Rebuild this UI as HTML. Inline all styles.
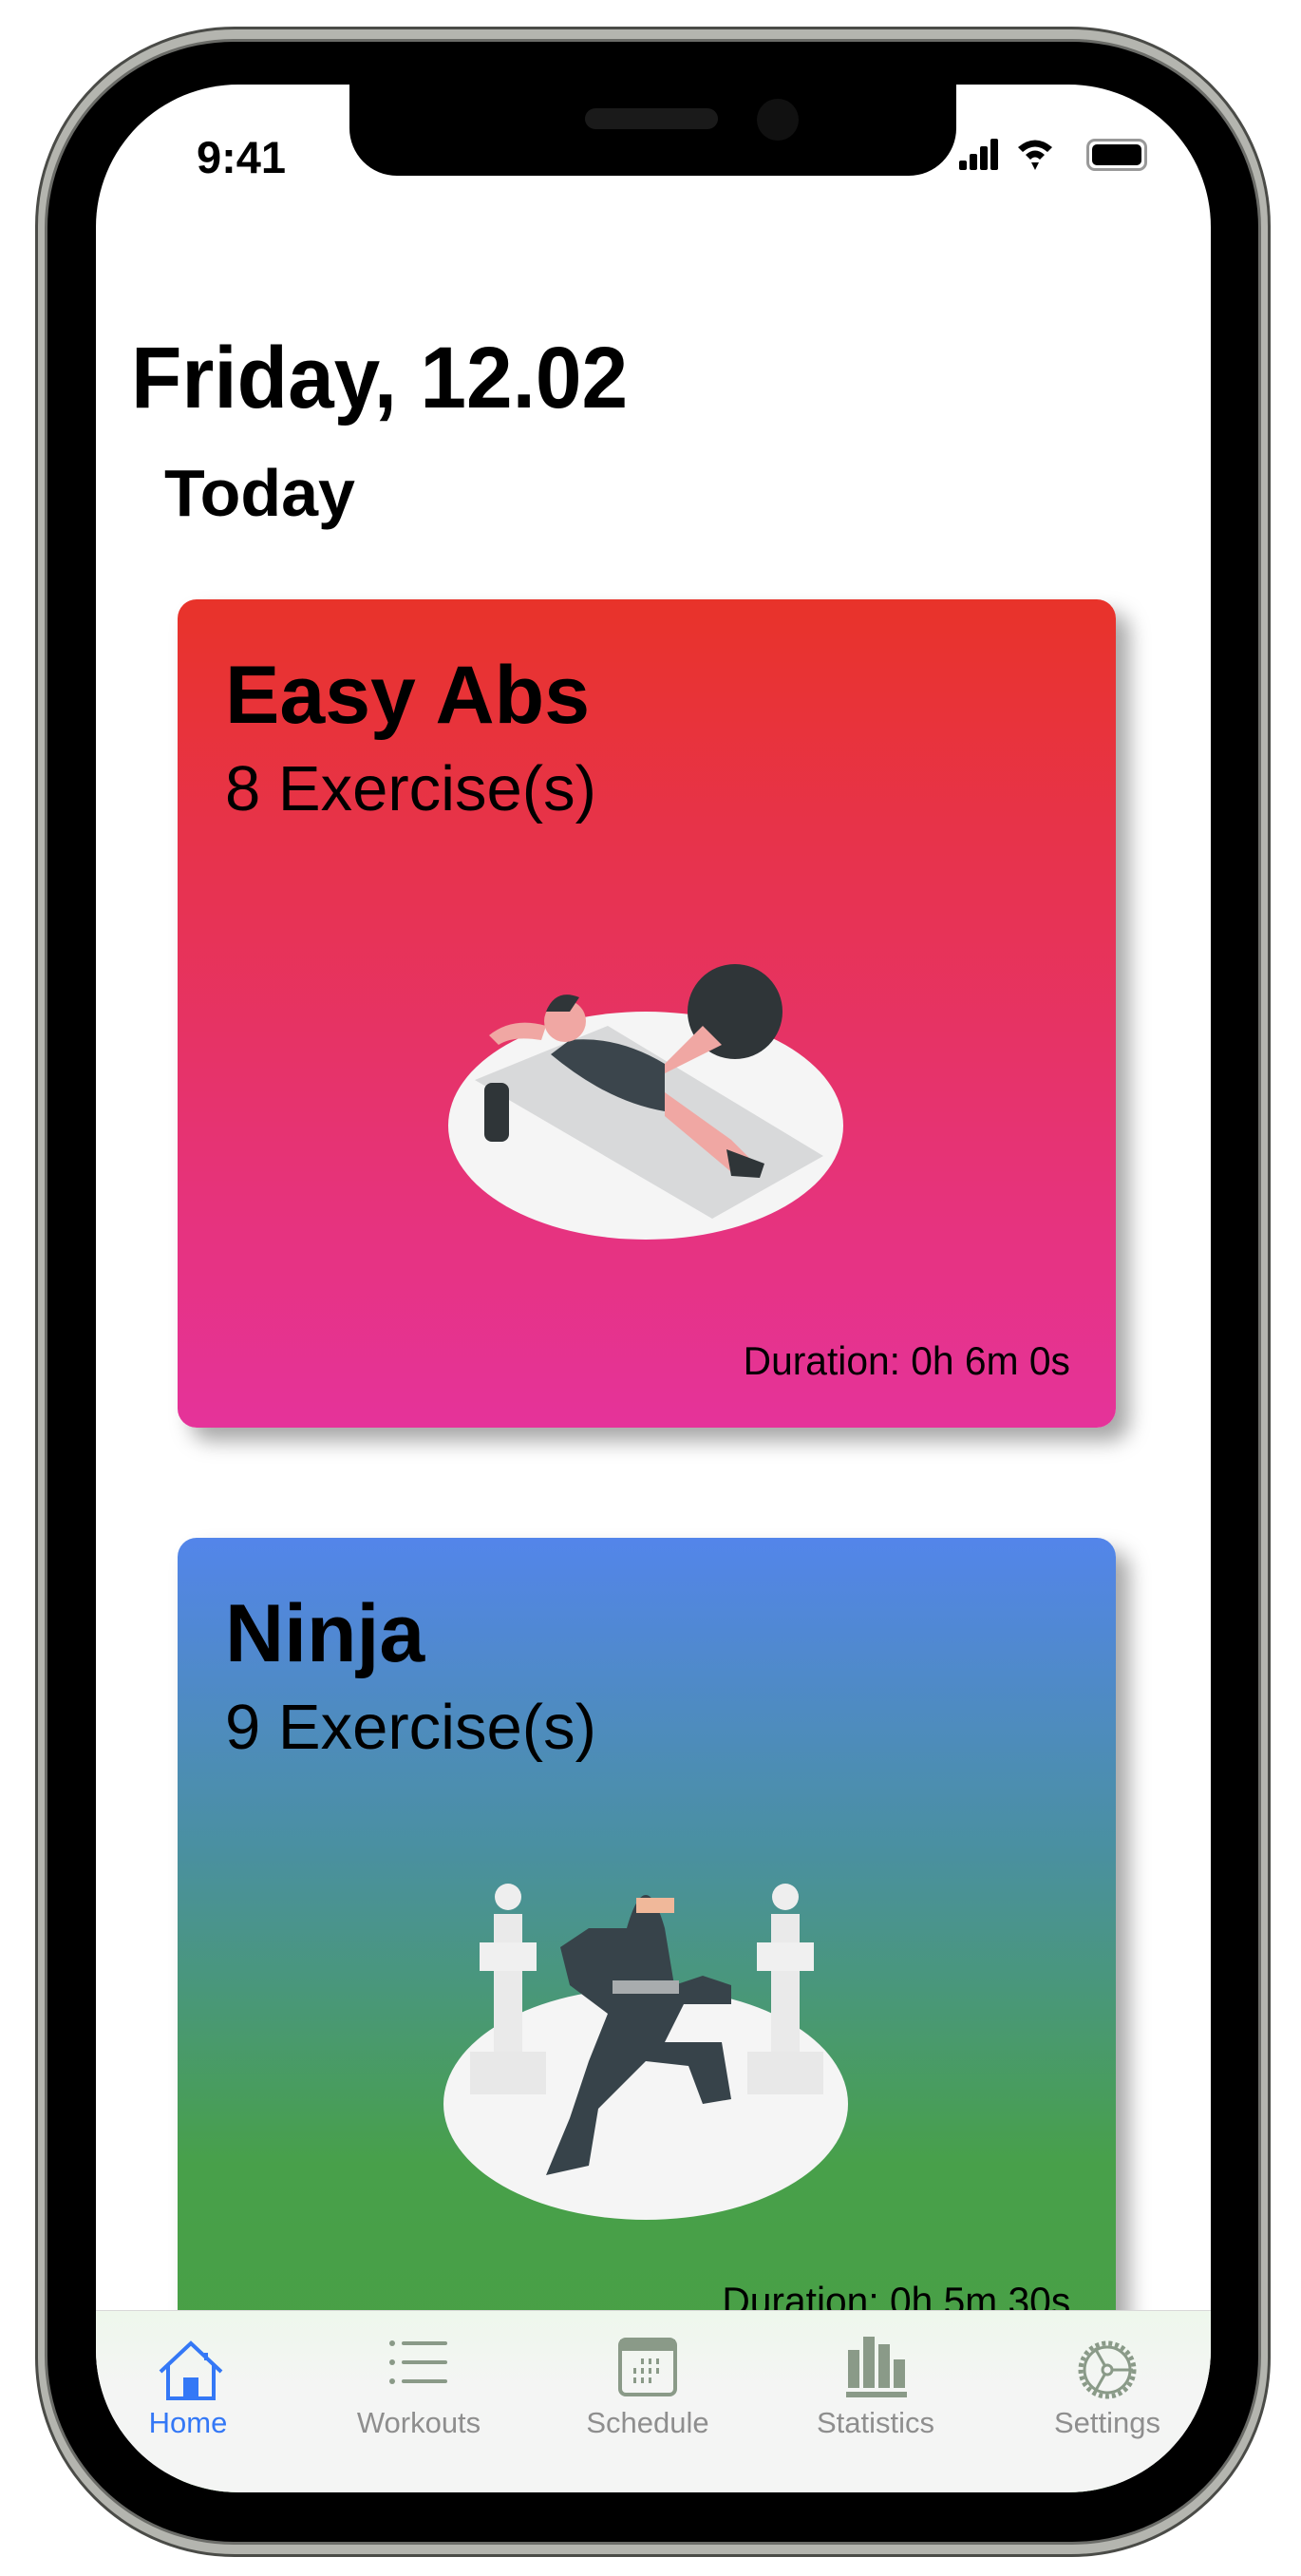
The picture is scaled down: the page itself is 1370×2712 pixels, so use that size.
<!DOCTYPE html>
<html><head><meta charset="utf-8">
<style>
*{margin:0;padding:0;box-sizing:border-box}
html,body{width:1370px;height:2712px;background:#fff;overflow:hidden;font-family:"Liberation Sans",sans-serif}
.abs{position:absolute}
.frame{left:37px;top:28px;width:1301px;height:2664px;border-radius:210px;background:#b4b5af;border:3px solid #4a4b47}
.bezel{left:50px;top:44px;width:1275px;height:2632px;border-radius:196px;background:#000;box-shadow:0 0 0 3px #6b6c68}
.screen{left:101px;top:89px;width:1174px;height:2535px;border-radius:150px;background:#fff;overflow:hidden}
.notch{left:368px;top:80px;width:639px;height:105px;background:#000;border-radius:0 0 50px 50px}
.card{position:absolute;left:86px;width:988px;border-radius:20px;box-shadow:14px 14px 22px rgba(0,0,0,.35)}
.t{position:absolute;left:50px;color:#000;white-space:nowrap}
.h{font-weight:bold;font-size:86px}
.s{font-size:67px}
.d{position:absolute;right:48px;font-size:42px;white-space:nowrap;transform:scaleX(.97);transform-origin:right}
.tab{left:0;top:2343px;width:1174px;height:200px;background:linear-gradient(#eef7ec,#f4f5f4 40%);border-top:1px solid #d8d8d8}
.lbl{position:absolute;top:100px;font-size:31px;color:#8e8e8e;width:200px;text-align:center}
</style></head><body>
<div class="abs frame"></div>
<div class="abs bezel"></div>
<div class="abs screen">
  <div class="abs" style="left:37px;top:257px;font-weight:bold;font-size:92px;transform:scaleX(.95);transform-origin:left;white-space:nowrap">Friday, 12.02</div>
  <div class="abs" style="left:72px;top:390px;font-weight:bold;font-size:70px">Today</div>

  <div class="card" style="top:542px;height:872px;background:linear-gradient(#e8332a,#e5339a)">
    <div class="t h" style="top:52px">Easy Abs</div>
    <div class="t s" style="top:161px">8 Exercise(s)</div>
    <div class="d" style="top:778px">Duration: 0h 6m 0s</div>
    <svg class="abs" style="left:0;top:0" width="988" height="872" viewBox="187 631 988 872">
      <ellipse cx="680" cy="1185" rx="208" ry="120" fill="#f5f5f5"/>
      <polygon points="500,1137 640,1080 867,1217 750,1283" fill="#d8d9da"/>
      <circle cx="774" cy="1065" r="50" fill="#2f3538"/>
      <rect x="510" y="1140" width="26" height="62" rx="8" fill="#2f3538"/>
      <path d="M580,1110 Q640,1160 700,1170 L700,1120 Q650,1090 600,1095 Z" fill="#3b454c"/>
      <path d="M700,1130 L760,1100 L740,1080 L700,1120 Z" fill="#f0a7a3"/>
      <path d="M700,1150 L770,1200 L790,1220 L800,1235 L775,1238 L700,1175 Z" fill="#f0a7a3"/>
      <path d="M765,1210 L805,1225 L800,1240 L770,1238 Z" fill="#2f3538"/>
      <circle cx="595" cy="1075" r="22" fill="#f0a7a3"/>
      <path d="M575,1065 Q585,1040 610,1050 L600,1065 Z" fill="#2f3538"/>
      <path d="M515,1090 Q540,1070 575,1080 L570,1095 Q540,1090 525,1100 Z" fill="#f0a7a3"/>
    </svg>
  </div>

  <div class="card" style="top:1530px;height:1100px;background:linear-gradient(#5385ea 0%,#4a90a0 30%,#48a04a 60%,#4aa040)">
    <div class="t h" style="top:52px">Ninja</div>
    <div class="t s" style="top:161px">9 Exercise(s)</div>
    <div class="d" style="top:780px">Duration: 0h 5m 30s</div>
    <svg class="abs" style="left:0;top:0" width="988" height="1000" viewBox="187 1619 988 1000">
      <ellipse cx="680" cy="2215" rx="213" ry="122" fill="#f5f5f5"/>
      <rect x="520" y="2015" width="30" height="170" fill="#eaeaea"/>
      <rect x="505" y="2045" width="60" height="30" fill="#f0f0f0"/>
      <circle cx="535" cy="1997" r="14" fill="#eee"/>
      <rect x="495" y="2160" width="80" height="45" fill="#e8e8e8"/>
      <rect x="812" y="2015" width="30" height="170" fill="#eaeaea"/>
      <rect x="797" y="2045" width="60" height="30" fill="#f0f0f0"/>
      <circle cx="827" cy="1997" r="14" fill="#eee"/>
      <rect x="787" y="2160" width="80" height="45" fill="#e8e8e8"/>
      <path d="M660,2030 Q680,1960 700,2030 L710,2090 L740,2080 L770,2090 L770,2110 L720,2110 L700,2150 L760,2150 L770,2210 L740,2215 L725,2175 L680,2170 L630,2220 L620,2280 L575,2290 L600,2230 L620,2170 L640,2120 L600,2090 L590,2050 L620,2030 Z" fill="#37434a"/>
      <rect x="645" y="2085" width="70" height="14" fill="#a8acae"/>
      <rect x="670" y="1998" width="40" height="16" fill="#f0b89a"/>
    </svg>
  </div>

  <div class="abs tab">
    <svg class="abs" style="left:64px;top:30px" width="72" height="66" viewBox="0 0 72 66"><path d="M4,34 L36,4 L68,34 M12,26 V62 H60 V26 M52,14 V22" fill="none" stroke="#3478f6" stroke-width="4"/><rect x="28" y="40" width="16" height="22" fill="#3478f6"/></svg>
    <div class="lbl" style="left:-3px;color:#3478f6">Home</div>
    <svg class="abs" style="left:308px;top:30px" width="64" height="48" viewBox="0 0 64 48"><g fill="#8a9a88"><circle cx="4" cy="4" r="3"/><circle cx="4" cy="24" r="3"/><circle cx="4" cy="44" r="3"/><rect x="14" y="2" width="48" height="4" rx="2"/><rect x="14" y="22" width="48" height="4" rx="2"/><rect x="14" y="42" width="48" height="4" rx="2"/></g></svg>
    <div class="lbl" style="left:240px">Workouts</div>
    <svg class="abs" style="left:550px;top:28px" width="62" height="62" viewBox="0 0 62 62"><rect x="2" y="2" width="58" height="58" rx="6" fill="none" stroke="#8a9a88" stroke-width="4"/><rect x="2" y="2" width="58" height="12" fill="#8a9a88"/><g fill="#8a9a88"><rect x="24" y="22" width="3" height="6"/><rect x="32" y="22" width="3" height="6"/><rect x="40" y="22" width="3" height="6"/><rect x="16" y="32" width="3" height="6"/><rect x="24" y="32" width="3" height="6"/><rect x="32" y="32" width="3" height="6"/><rect x="40" y="32" width="3" height="6"/><rect x="16" y="42" width="3" height="6"/><rect x="24" y="42" width="3" height="6"/><rect x="32" y="42" width="3" height="6"/></g></svg>
    <div class="lbl" style="left:481px">Schedule</div>
    <svg class="abs" style="left:790px;top:27px" width="66" height="64" viewBox="0 0 66 64"><g fill="#8a9a88"><rect x="2" y="14" width="12" height="40"/><rect x="18" y="0" width="12" height="54"/><rect x="34" y="8" width="12" height="46"/><rect x="50" y="24" width="12" height="30"/><rect x="0" y="58" width="64" height="6"/></g></svg>
    <div class="lbl" style="left:721px">Statistics</div>
    <svg class="abs" style="left:1030px;top:27px" width="70" height="70" viewBox="0 0 70 70"><circle cx="35" cy="35" r="28" fill="none" stroke="#8a9a88" stroke-width="5" stroke-dasharray="4 3"/><circle cx="35" cy="35" r="24" fill="none" stroke="#8a9a88" stroke-width="3"/><path d="M35,35 L62,35 M35,35 L22,12 M35,35 L22,58" stroke="#8a9a88" stroke-width="3"/><circle cx="35" cy="35" r="5" fill="#f4f5f4" stroke="#8a9a88" stroke-width="3"/></svg>
    <div class="lbl" style="left:965px">Settings</div>
  </div>
</div>
<div class="abs notch"></div>
<div class="abs" style="left:616px;top:114px;width:140px;height:22px;border-radius:11px;background:#1a1a1a"></div>
<div class="abs" style="left:797px;top:104px;width:44px;height:44px;border-radius:22px;background:#111"></div>
<div class="abs" style="left:207px;top:138px;font-size:47px;font-weight:bold">9:41</div>
<svg class="abs" style="left:1010px;top:143px" width="120" height="40" viewBox="0 0 120 40"><g fill="#000"><rect x="0" y="26" width="8" height="10" rx="2"/><rect x="11" y="19" width="8" height="17" rx="2"/><rect x="22" y="11" width="8" height="25" rx="2"/><rect x="33" y="3" width="8" height="33" rx="2"/><path d="M62,12 Q80,-3 98,12 L93,17 Q80,6 67,17 Z M70,20 Q80,11 90,20 L85,25 Q80,20 75,25 Z M76,28 L84,28 L80,36 Z"/></g></svg>
<div class="abs" style="left:1144px;top:146px;width:64px;height:34px;border:3px solid #999;border-radius:9px;padding:3px"><div style="width:100%;height:100%;background:#000;border-radius:5px"></div></div>
</body></html>
